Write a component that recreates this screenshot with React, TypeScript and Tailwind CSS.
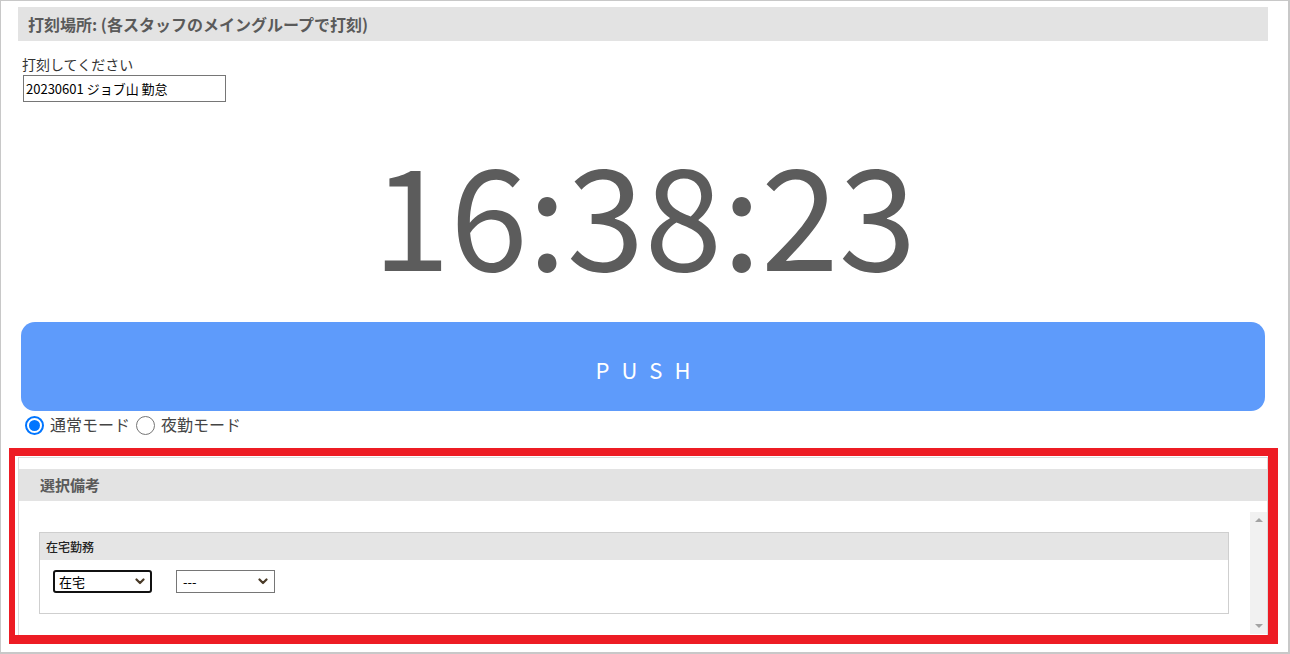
import React from "react";

function Chevron() {
  return (
    <svg width="10" height="7" viewBox="0 0 10 7" className="shrink-0">
      <path d="M1.5 1.5 L5 5 L8.5 1.5" fill="none" stroke="#4a3b28" strokeWidth="2.2" strokeLinecap="round" strokeLinejoin="round" />
    </svg>
  );
}

function FakeSelect({ value, focused }: { value: string; focused?: boolean }) {
  return (
    <div
      className={
        focused
          ? "flex h-[23px] w-[99px] items-center justify-between rounded-[3px] border-2 border-[#111] pl-[4px] pr-[5px] text-[13px] text-black"
          : "flex h-[23px] w-[99px] items-center justify-between border border-[#767676] pl-[6px] pr-[6px] text-[13px] text-black"
      }
    >
      <span>{value}</span>
      <Chevron />
    </div>
  );
}

function Radio({ checked }: { checked?: boolean }) {
  return checked ? (
    <span className="flex h-[19px] w-[19px] items-center justify-center rounded-full border-2 border-[#0075ff] bg-white">
      <span className="h-[11px] w-[11px] rounded-full bg-[#0075ff]" />
    </span>
  ) : (
    <span className="h-[19px] w-[19px] rounded-full border-[1.5px] border-[#767676] bg-white" />
  );
}

export default function App() {
  return (
    <div className="relative h-[654px] w-[1290px] overflow-hidden border-t border-l border-r-2 border-b-2 border-[#c8c8c8] bg-white font-['Noto_Sans_CJK_JP','Noto_Sans',sans-serif]">
      <div className="ml-[17px] mt-[6px] flex h-[34px] w-[1250px] items-center bg-[#e3e3e3] pl-[10px] text-[16px] font-bold text-[#5a5a5a]">
        打刻場所: (各スタッフのメイングループで打刻)
      </div>

      <p className="ml-[21px] mt-[13px] text-[14px] leading-[20px] text-[#333]">打刻してください</p>
      <div className="ml-[22px] mt-[1px] flex h-[27px] w-[203px] items-center border border-[#767676] px-[2px] text-[13px] text-black">
        20230601 ジョブ山 勤怠
      </div>

      <div className="mt-[38px] text-center text-[140px] leading-[140px] text-[#5c5c5c]">16:38:23</div>

      <button
        type="button"
        className="ml-[20px] mt-[42px] flex h-[89px] w-[1244px] items-center justify-center rounded-[14px] bg-[#5e9bfb] pl-[0.55em] pt-[6px] text-[22px] tracking-[0.55em] text-white"
      >
        PUSH
      </button>

      <div className="ml-[24px] mt-[3px] flex h-[22px] items-center text-[16px] text-[#444]">
        <Radio checked />
        <span className="ml-[6px] -translate-y-[1px]">通常モード</span>
        <span className="ml-[6px]" />
        <Radio />
        <span className="ml-[6px] -translate-y-[1px]">夜勤モード</span>
      </div>

      <section className="ml-[17px] mt-[21px] h-[179px] w-[1250px] border border-[#dcdcdc] pt-[11px]">
        <div className="flex h-[32px] items-center bg-[#e3e3e3] pl-[21px] text-[15px] font-bold text-[#5a5a5a]">選択備考</div>
        <div className="mt-[11px] flex h-[122px]">
          <div className="flex-1 pl-[20px] pr-[21px] pt-[20px]">
            <div className="h-[82px] border border-[#cfcfcf]">
              <div className="flex h-[27px] items-center bg-[#e5e5e5] pl-[6px] text-[12px] font-medium text-[#222]">在宅勤務</div>
              <div className="mt-[10px] flex gap-[24px] pl-[13px]">
                <FakeSelect value="在宅" focused />
                <FakeSelect value="---" />
              </div>
            </div>
          </div>
          <div className="flex w-[17px] flex-col items-center justify-between bg-[#f1f1f1] py-[6px]">
            <span className="h-0 w-0 border-x-[4px] border-b-[4px] border-x-transparent border-b-[#a3a3a3]" />
            <span className="h-0 w-0 border-x-[4px] border-t-[4px] border-x-transparent border-t-[#a3a3a3]" />
          </div>
        </div>
      </section>

      <div className="pointer-events-none absolute left-[8px] top-[447px] h-[196px] w-[1269px] border-t-[8px] border-l-[6px] border-r-[10px] border-b-[9px] border-[#ed1c24]" />
    </div>
  );
}
